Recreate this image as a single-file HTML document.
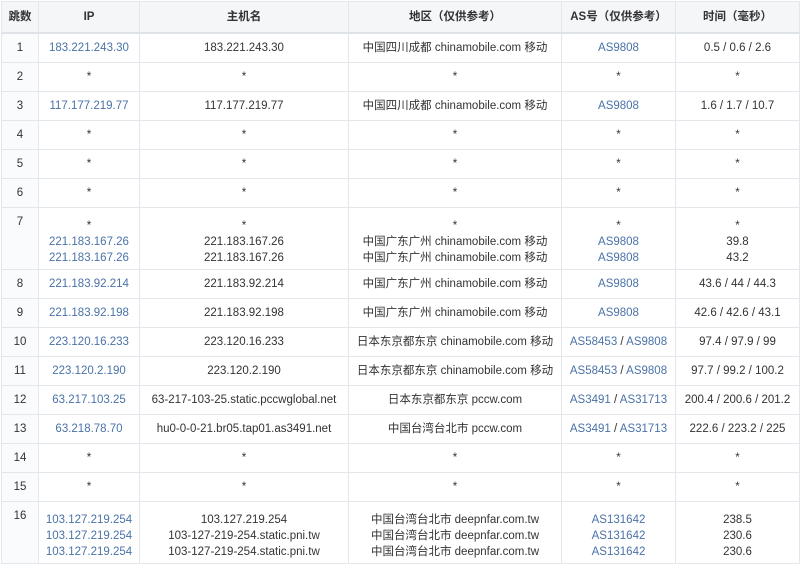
<!DOCTYPE html>
<html><head><meta charset="utf-8"><style>
body{margin:0;background:#fff;font-family:"Liberation Sans","Noto Sans CJK SC",sans-serif;font-size:11.5px;color:#333;}
table{position:absolute;left:1px;top:1px;border-collapse:collapse;table-layout:fixed;width:798px;}
td,th{border:1px solid #e3e6ea;text-align:center;vertical-align:middle;padding:0;line-height:16px;}
th{background:#f5f6f8;font-weight:bold;height:30px;color:#333;border-bottom:2px solid #dfe2e6;}
td.n{background:#fafbfc;text-align:center;}
tr.t td.n{vertical-align:top;padding-top:6px;}
.b{color:#4a72a8}
tr{height:29px}
tr.t{height:62px}
tr.t td{vertical-align:bottom;padding-bottom:3px}
</style></head><body>
<table>
<colgroup><col style="width:37px"><col style="width:101px"><col style="width:209px"><col style="width:213px"><col style="width:114px"><col style="width:124px"></colgroup>
<tr><th>跳数</th><th>IP</th><th>主机名</th><th>地区（仅供参考）</th><th>AS号（仅供参考）</th><th>时间（毫秒）</th></tr>
<tr><td class="n">1</td><td class="b">183.221.243.30</td><td>183.221.243.30</td><td>中国四川成都 chinamobile.com 移动</td><td class="b">AS9808</td><td>0.5 / 0.6 / 2.6</td></tr>
<tr><td class="n">2</td><td>*</td><td>*</td><td>*</td><td>*</td><td>*</td></tr>
<tr><td class="n">3</td><td class="b">117.177.219.77</td><td>117.177.219.77</td><td>中国四川成都 chinamobile.com 移动</td><td class="b">AS9808</td><td>1.6 / 1.7 / 10.7</td></tr>
<tr><td class="n">4</td><td>*</td><td>*</td><td>*</td><td>*</td><td>*</td></tr>
<tr><td class="n">5</td><td>*</td><td>*</td><td>*</td><td>*</td><td>*</td></tr>
<tr><td class="n">6</td><td>*</td><td>*</td><td>*</td><td>*</td><td>*</td></tr>
<tr class="t"><td class="n">7</td><td>*<br><span class="b">221.183.167.26<br>221.183.167.26</span></td><td>*<br>221.183.167.26<br>221.183.167.26</td><td>*<br>中国广东广州 chinamobile.com 移动<br>中国广东广州 chinamobile.com 移动</td><td>*<br><span class="b">AS9808<br>AS9808</span></td><td>*<br>39.8<br>43.2</td></tr>
<tr><td class="n">8</td><td class="b">221.183.92.214</td><td>221.183.92.214</td><td>中国广东广州 chinamobile.com 移动</td><td class="b">AS9808</td><td>43.6 / 44 / 44.3</td></tr>
<tr><td class="n">9</td><td class="b">221.183.92.198</td><td>221.183.92.198</td><td>中国广东广州 chinamobile.com 移动</td><td class="b">AS9808</td><td>42.6 / 42.6 / 43.1</td></tr>
<tr><td class="n">10</td><td class="b">223.120.16.233</td><td>223.120.16.233</td><td>日本东京都东京 chinamobile.com 移动</td><td><span class="b">AS58453</span> / <span class="b">AS9808</span></td><td>97.4 / 97.9 / 99</td></tr>
<tr><td class="n">11</td><td class="b">223.120.2.190</td><td>223.120.2.190</td><td>日本东京都东京 chinamobile.com 移动</td><td><span class="b">AS58453</span> / <span class="b">AS9808</span></td><td>97.7 / 99.2 / 100.2</td></tr>
<tr><td class="n">12</td><td class="b">63.217.103.25</td><td>63-217-103-25.static.pccwglobal.net</td><td>日本东京都东京 pccw.com</td><td><span class="b">AS3491</span> / <span class="b">AS31713</span></td><td>200.4 / 200.6 / 201.2</td></tr>
<tr><td class="n">13</td><td class="b">63.218.78.70</td><td>hu0-0-0-21.br05.tap01.as3491.net</td><td>中国台湾台北市 pccw.com</td><td><span class="b">AS3491</span> / <span class="b">AS31713</span></td><td>222.6 / 223.2 / 225</td></tr>
<tr><td class="n">14</td><td>*</td><td>*</td><td>*</td><td>*</td><td>*</td></tr>
<tr><td class="n">15</td><td>*</td><td>*</td><td>*</td><td>*</td><td>*</td></tr>
<tr class="t"><td class="n">16</td><td class="b">103.127.219.254<br>103.127.219.254<br>103.127.219.254</td><td>103.127.219.254<br>103-127-219-254.static.pni.tw<br>103-127-219-254.static.pni.tw</td><td>中国台湾台北市 deepnfar.com.tw<br>中国台湾台北市 deepnfar.com.tw<br>中国台湾台北市 deepnfar.com.tw</td><td class="b">AS131642<br>AS131642<br>AS131642</td><td>238.5<br>230.6<br>230.6</td></tr>
</table>
</body></html>
